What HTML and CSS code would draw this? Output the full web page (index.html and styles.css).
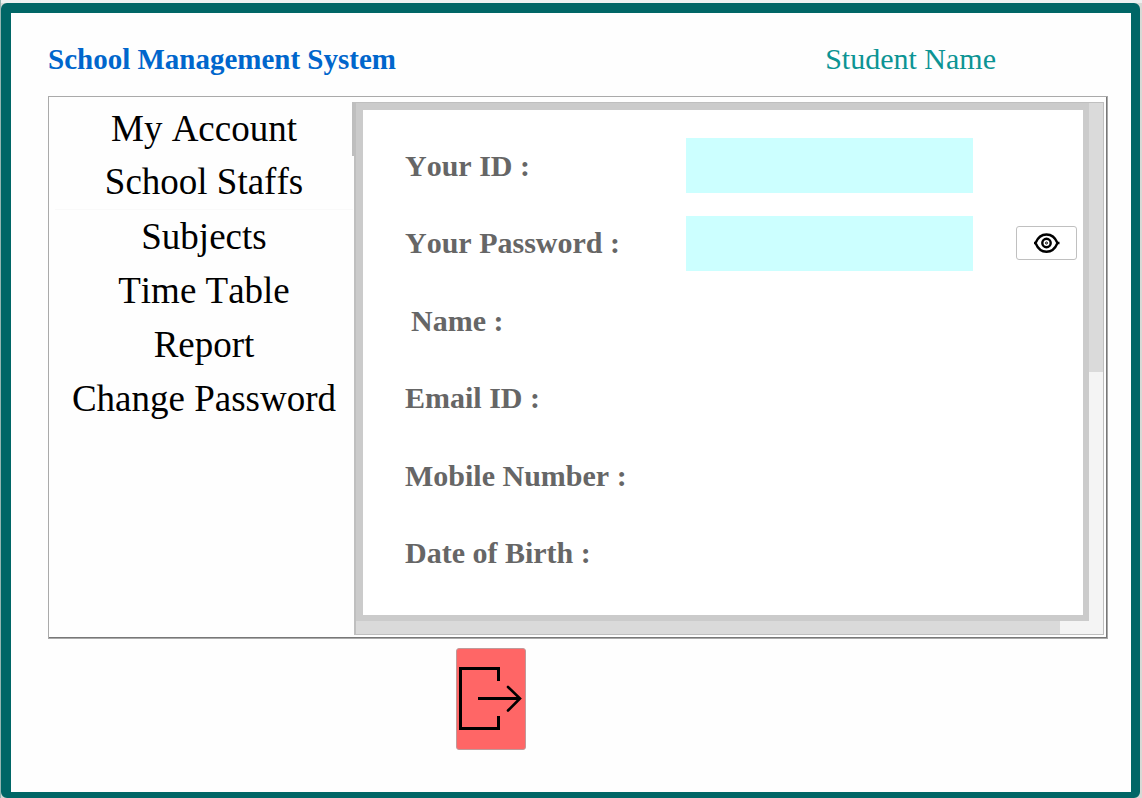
FILE: index.html
```html
<!DOCTYPE html>
<html lang="en">
<head>
<meta charset="utf-8">
<meta name="viewport" content="width=device-width, initial-scale=1">
<title>School Management System</title>
<link rel="stylesheet" href="styles.css">
</head>
<body>
<div class="window">
  <header class="header">
    <h1 class="title">School Management System</h1>
    <p class="student">Student Name</p>
  </header>
  <main class="panel">
    <nav class="menu">
      <button type="button" class="menu-item">My Account</button>
      <button type="button" class="menu-item">School Staffs</button>
      <button type="button" class="menu-item">Subjects</button>
      <button type="button" class="menu-item">Time Table</button>
      <button type="button" class="menu-item">Report</button>
      <button type="button" class="menu-item">Change Password</button>
    </nav>
    <div class="menu-thumb"></div>
    <section class="viewport">
      <form class="details">
        <div class="row">
          <label for="uid">Your ID :</label>
          <input class="field" id="uid" type="text">
        </div>
        <div class="row">
          <label for="pwd">Your Password :</label>
          <input class="field" id="pwd" type="password">
          <button type="button" class="reveal" aria-label="Show password">
            <svg width="28" height="22" viewBox="0 0 28 22" fill="none" stroke="#000" stroke-width="2.4">
              <path d="M1 11H2.500C5 5 9 2.500 13.500 2.500S22 5 24.500 11H26.500H24.500C22 17 18 19.800 13.500 19.800S5 17 2.500 11"/>
              <circle cx="13.500" cy="11" r="4.200"/>
              <circle cx="13.500" cy="11" r="1" stroke-width="1"/>
            </svg>
          </button>
        </div>
        <div class="row"><label class="indent" for="name">Name :</label><output id="name"></output></div>
        <div class="row"><label for="email">Email ID :</label><output id="email"></output></div>
        <div class="row"><label for="mobile">Mobile Number :</label><output id="mobile"></output></div>
        <div class="row"><label for="dob">Date of Birth :</label><output id="dob"></output></div>
      </form>
      <div class="track-v"><div class="thumb-v"></div></div>
      <div class="track-h"><div class="thumb-h"></div></div>
    </section>
  </main>
  <footer class="footer">
    <button type="button" class="logout" aria-label="Log out">
      <svg width="68" height="100" viewBox="0 0 68 100" fill="none" stroke="#000" stroke-width="3">
        <path d="M41.500 32V19.500H3.500V79.500H41.500V67"/>
        <path d="M21 49.500H63"/>
        <path d="M51 38L63 49.500L51 61.500" stroke-width="2.600" stroke-linecap="round"/>
      </svg>
    </button>
  </footer>
</div>
</body>
</html>
```
FILE: styles.css
```css
* { box-sizing: border-box; }

body {
  margin: 0;
  min-height: 100vh;
  padding: 3px 2px 0 1px;
  display: flex;
  background: linear-gradient(90deg, #94b5b1 1px, transparent 1px), linear-gradient(#edf1f1 3px, #d6dad6 3px);
  font-family: "Liberation Serif", "Times New Roman", serif;
  font-kerning: none;
}

.window {
  flex: 1;
  display: flex;
  flex-direction: column;
  border: solid #006666;
  border-width: 10px 9px 6px 10px;
  border-radius: 6px;
  background: #fefefe;
  padding: 0 23px 0 37px;
}

.header {
  height: 83px;
  display: flex;
  justify-content: space-between;
  align-items: center;
  padding: 9px 112px 0 0;
}

.title,
.student {
  margin: 0;
  font-size: 29px;
  line-height: 34px;
}

.title { color: #0066cc; }

.student {
  color: #0c9494;
  font-size: 30px;
}

.panel {
  flex: 1;
  display: flex;
  border: 1px solid #aaa;
  box-shadow: inset -1px -1px #777;
  padding: 5px 3px 3px 6px;
}

.menu {
  width: 298px;
  display: flex;
  flex-direction: column;
}

.menu-item {
  height: 54px;
  border: 0;
  padding: 0 0 1px;
  background: none;
  color: #000;
  font-family: inherit;
  font-kerning: none;
  font-size: 37px;
  line-height: 42px;
}

.menu-item:nth-child(2) { border-bottom: 1px solid #f9f9f9; }

.menu-thumb {
  width: 2px;
  height: 54px;
  margin-left: -1px;
  background: #bebebe;
}

.viewport {
  flex: 1;
  display: grid;
  grid-template-columns: 1fr 14px;
  grid-template-rows: 1fr 13px;
  border: 1px solid #bfbfbf;
  border-left-width: 2px;
  background: #f4f4f4;
}

.details {
  display: grid;
  grid-auto-rows: 1fr;
  border: solid #cbcbcb;
  border-width: 7px 6px 6px 7px;
  background: #fff;
  padding: 17px 6px 23px 42px;
  color: #666;
  font-size: 30px;
  font-weight: bold;
  line-height: 34px;
}

.row {
  display: grid;
  grid-template-columns: 281fr 287fr 104fr;
  align-items: center;
}

.indent { padding-left: 6px; }

.field {
  width: 100%;
  height: 55px;
  border: 0;
  padding: 0 8px;
  background: #ccffff;
  font: inherit;
}

.reveal {
  justify-self: end;
  width: 61px;
  height: 34px;
  display: flex;
  align-items: center;
  justify-content: center;
  border: 1px solid #c0c0c0;
  border-radius: 3px;
  padding: 0;
  background: #fff;
}

.thumb-v {
  height: 52%;
  background: #dadada;
}

.thumb-h {
  width: 96%;
  height: 100%;
  background: #dadada;
}

.footer {
  padding: 9px 0 42px 408px;
}

.logout {
  width: 70px;
  height: 102px;
  display: block;
  border: 1px solid #c09a9a;
  border-radius: 3px;
  padding: 0;
  background: #ff6666;
}

.logout svg { display: block; }
```
